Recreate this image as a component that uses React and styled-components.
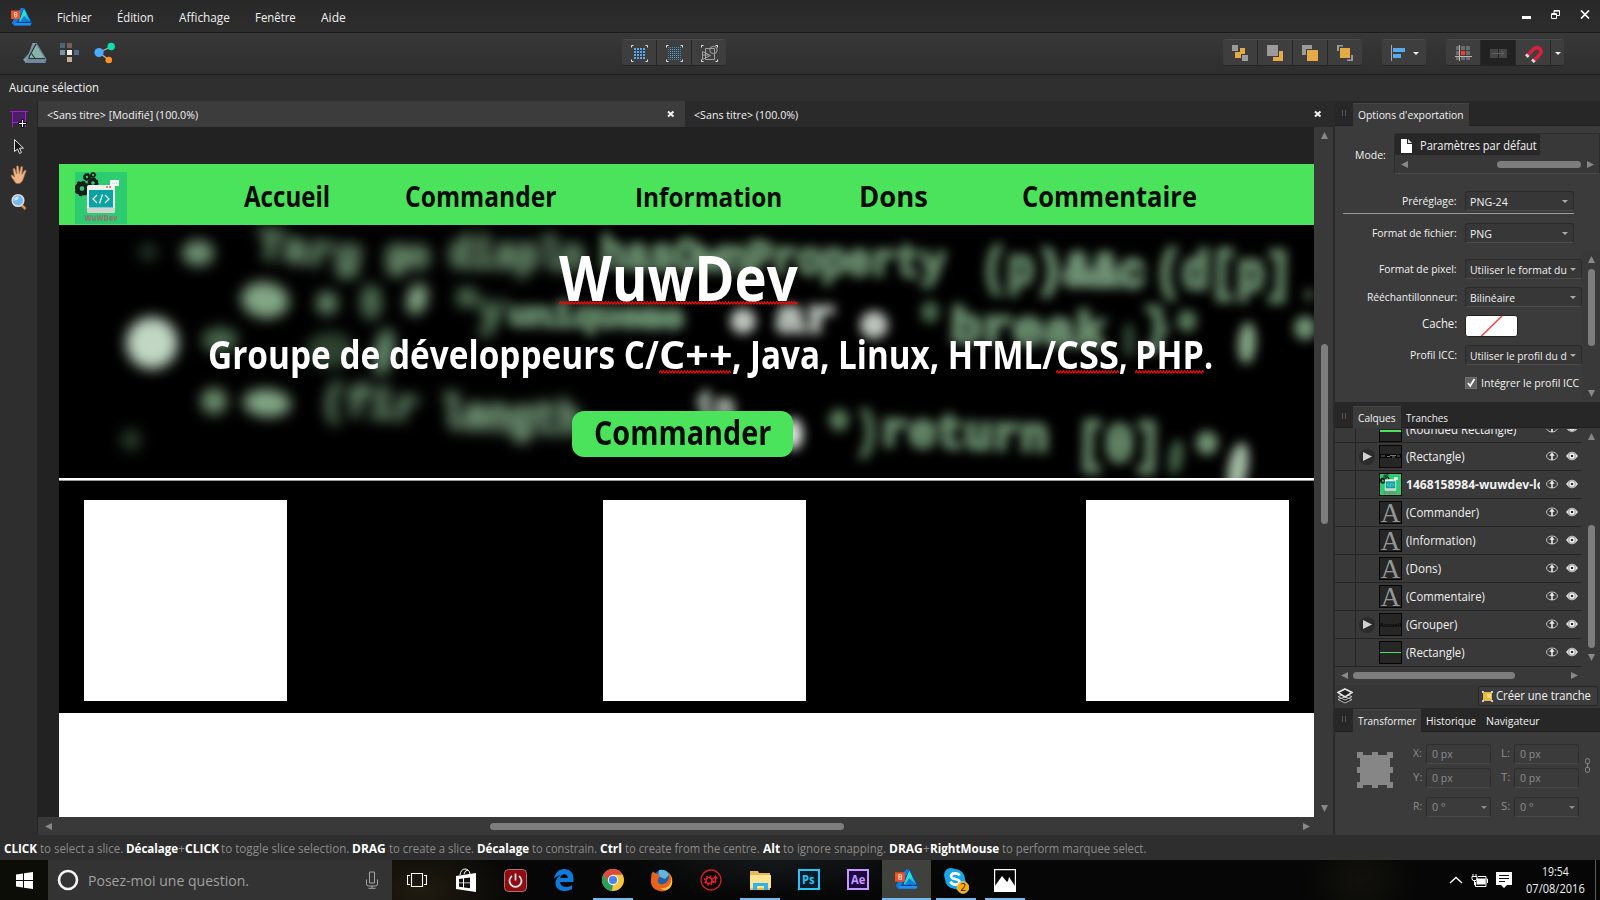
import React, { useLayoutEffect, useRef, useState } from "react";
import styled, { createGlobalStyle, css } from "styled-components";

const Global = createGlobalStyle`
  * { box-sizing: border-box; }
  html, body { margin: 0; background: #2e2e2e; }
  body { font-family: "Open Sans", "Noto Sans", sans-serif; font-size: 12px; color: #f1f1f1; overflow: hidden; }
  svg { display: block; flex: none; }
`;

/* ---------- text fitted to a given width ---------- */
const FitBox = styled.span`
  display: block;
  flex: none;
  width: ${(p) => p.$w}px;
  margin-left: ${(p) => p.$gap || 0}px;
  white-space: nowrap;
  font-size: ${(p) => (p.$size ? p.$size + "px" : "inherit")};
  font-weight: ${(p) => p.$weight || "inherit"};
  line-height: ${(p) => p.$lh || 16}px;
  color: ${(p) => p.$color || "inherit"};
`;
const FitInner = styled.span`
  display: inline-block;
  white-space: pre;
  transform-origin: 0 50%;
`;
function Fit({ w, gap, size, weight, lh, color, children }) {
  const ref = useRef(null);
  const [k, setK] = useState(1);
  useLayoutEffect(() => {
    const natural = ref.current.offsetWidth;
    if (natural) setK(w / natural);
  }, [w, children]);
  return (
    <FitBox $w={w} $gap={gap} $size={size} $weight={weight} $lh={lh} $color={color}>
      <FitInner ref={ref} style={{ transform: `scaleX(${k})` }}>{children}</FitInner>
    </FitBox>
  );
}

/* ---------- frame ---------- */
const Screen = styled.div`
  width: 1600px; height: 900px; display: flex; flex-direction: column; background: #2e2e2e; overflow: hidden;
`;
const TitleBar = styled.header`
  height: 33px; flex: none; display: flex; align-items: center; padding: 2px 10px 0 11px;
  background: linear-gradient(#282828, #2d2d2d); border-bottom: 1px solid #1b1b1b;
`;
const Menu = styled.nav`display: flex; margin-left: 24px; flex: 1; padding-top: 1px;`;
const WindowButtons = styled.div`display: flex; gap: 20px; align-items: center; padding-bottom: 5px;`;
const Toolbar = styled.div`
  height: 42px; flex: none; display: flex; align-items: flex-start; padding: 6px 0 0 23px;
  background: linear-gradient(#383838, #2e2e2e); border-bottom: 1px solid #1b1b1b;
`;
const Personas = styled.div`display: flex; gap: 13px; padding-top: 3px; width: 599px;`;
const ButtonGroup = styled.div`
  display: flex; gap: 1px; height: 27px; margin-left: ${(p) => p.$gap || 0}px; border-radius: 3px; overflow: hidden;
  border-top: 1px solid #4b4b4b; border-bottom: 1px solid #242424; background: #272727;
`;
const ToolButton = styled.div`
  width: ${(p) => p.$w || 34}px; display: flex; align-items: center; justify-content: center; gap: 8px;
  padding: 2px 0 0 ${(p) => (p.$w ? 0 : 1)}px;
  background: ${(p) => (p.$down ? "#222" : "#3e3e3e")};
`;
const ContextBar = styled.div`height: 26px; flex: none; padding: 5px 9px; background: #2f2f2f;`;
const Main = styled.div`display: flex; height: 734px; flex: none;`;
const Tools = styled.aside`
  width: 38px; flex: none; background: #2e2e2e; padding: 10px 0 0 10px; display: flex; flex-direction: column;
  border-right: 1px solid #242424;
`;
const Workspace = styled.section`width: 1295px; flex: none; display: flex; flex-direction: column;`;
const DocTabs = styled.div`height: 26px; display: flex; background: #2a2a2a; flex: none;`;
const DocTab = styled.div`
  width: 647px; display: flex; align-items: center; justify-content: space-between; padding: 1px 10px 0 9px;
  background: ${(p) => (p.$active ? "#3c3c3c" : "#2a2a2a")};
`;
const CloseBox = styled.div`padding-bottom: 1px;`;
const CanvasRow = styled.div`display: flex; height: 690px; flex: none;`;
const Canvas = styled.div`
  width: 1276px; background: #222; padding: 37px 0 0 21px; overflow: hidden; flex: none;
`;
const ScrollV = styled.div`
  width: ${(p) => p.$w || 19}px; display: flex; flex-direction: column; align-items: center; background: #393939; flex: none;
  padding: ${(p) => p.$pad};
`;
const ScrollH = styled.div`
  height: 18px; display: flex; align-items: center; flex: none; background: #393939; padding: ${(p) => p.$pad};
`;
const Thumb = styled.div`
  width: ${(p) => p.$w}px; height: ${(p) => p.$h}px; border-radius: 4px; background: #7d7d7d;
  margin: ${(p) => p.$m || 0}; flex: none;
`;
const Spacer = styled.div`flex: 1;`;

/* ---------- artboard ---------- */
const Artboard = styled.div`width: 1255px; height: 653px; background: #fff; font-weight: 700;`;
const SiteNav = styled.div`
  height: 61px; background: #4be35b; color: #050b06; display: flex; align-items: flex-start; padding: 8px 0 0 16px;
`;
const NavItem = styled.div`margin-left: ${(p) => p.$gap}px; padding-top: ${(p) => p.$top || 0}px;`;
const Hero = styled.div`height: 253px; background: #000; position: relative; overflow: hidden;`;
const HeroBackdrop = styled.svg`position: absolute; left: 0; top: 0;`;
const HeroContent = styled.div`position: relative; height: 253px; padding-top: 18px; color: #fff;`;
const Title = styled.div`padding-left: 500px; height: 86px;`;
const Subtitle = styled.div`display: flex; padding-left: 149px; height: 82px;`;
const OrderButton = styled.div`
  width: 221px; height: 46px; margin-left: 513px; border-radius: 12px; background: #4be35b; color: #050b06;
  padding: 0 0 0 22px;
`;
const Misspelt = styled.div`flex: none;`;
const SquiggleLine = styled.svg`margin-top: ${(p) => p.$up}px;`;
const Rule = styled.div`height: 3px; background: #fff; border-bottom: 1px solid #999;`;
const Cards = styled.div`
  height: 232px; background: #000; display: flex; padding: 20px 0 0 25px;
`;
const Card = styled.div`width: 203px; height: 201px; background: #fff; margin: -1px ${(p) => p.$after || 0}px 0 0;`;

/* ---------- side panels ---------- */
const Side = styled.aside`
  width: 267px; flex: none; background: #3b3b3b; border-left: 2px solid #2a2a2a; display: flex; flex-direction: column;
`;
const PanelTabs = styled.div`
  height: ${(p) => p.$h}px; flex: none; display: flex; align-items: stretch; padding-top: ${(p) => p.$top}px;
  background: #272727; border-bottom: 1px solid #1f1f1f;
`;
const Grip = styled.div`
  width: 4px; height: 6px; margin: 7px 7px 0 7px; border: solid #565656; border-width: 0 1px;
`;
const PanelTab = styled.div`
  display: flex; align-items: center; padding: 0 5px; height: ${(p) => p.$h || 23}px; margin-bottom: -1px;
  background: ${(p) => (p.$active ? "#3b3b3b" : "transparent")};
  ${(p) => p.$active && css`border-top: 1px solid #454545;`}
`;
const ExportPanel = styled.div`height: 276px; flex: none;`;
const ModeRow = styled.div`display: flex; padding: 7px 0 0 20px; height: 65px;`;
const ModeLabel = styled.div`padding-top: 14px; width: 39px;`;
const ModeList = styled.div`
  width: 206px; height: 41px; border: 1px solid #2c2c2c; border-bottom-color: #4b4b4b; border-radius: 3px 0 0 3px;
  background: #383838;
`;
const ModeItem = styled.div`
  width: 145px; height: 21px; background: #272727; display: flex; align-items: center; padding: 2px 0 0 6px; gap: 8px;
`;
const ModeScroll = styled.div`display: flex; align-items: center; padding-left: 6px; height: 18px;`;
const Field = styled.div`display: flex; height: 20px; margin-top: ${(p) => p.$top || 0}px; align-items: center;`;
const Label = styled.div`width: 122px; display: flex; justify-content: flex-end; padding-bottom: ${(p) => p.$lift || 1}px;`;
const Select = styled.div`
  width: ${(p) => p.$w || 117}px; height: 20px; margin-left: 8px; padding: 1px 5px 0 4px; display: flex; align-items: center;
  justify-content: space-between; background: #373737; border: 1px solid #2b2b2b; border-bottom-color: #4d4d4d; border-radius: 3px;
`;
const Divider = styled.div`width: 231px; height: 1px; margin: 2px 0 0 8px; background: #969c98;`;
const ExportBody = styled.div`display: flex; height: 149px; margin-top: 8px;`;
const ExportFields = styled.div`width: 247px; padding-top: 8px;`;
const Swatch = styled.div`
  width: 53px; height: 22px; margin-left: 8px; border: 1px solid #222; border-radius: 3px; background: #fff; overflow: hidden;
`;
const Checkbox = styled.div`
  width: 12px; height: 12px; margin-left: 8px; background: #626262; border: 1px solid #707070;
`;
const LayerArea = styled.div`display: flex; height: 239px; flex: none; overflow: hidden;`;
const LayerList = styled.div`
  width: 247px; height: 239px; display: flex; flex-direction: column; justify-content: flex-end; overflow: hidden; background: #393939;
`;
const LayerRow = styled.div`
  height: ${(p) => (p.$partial ? 14 : 28)}px; flex: none; display: flex; align-items: ${(p) => (p.$partial ? "flex-end" : "center")};
  border-bottom: 1px solid #242424; overflow: hidden;
`;
const LayerGutter = styled.div`width: 21px; height: 28px; flex: none; border-right: 1px solid #242424;`;
const Expander = styled.div`
  width: 16px; height: 16px; border-radius: 8px; margin: 0 4px 0 3px; display: flex; align-items: center; justify-content: center;
  padding-left: 1px; background: ${(p) => (p.$on ? "#2b2b2b" : "transparent")};
`;
const LayerThumb = styled.div`
  width: 23px; height: 23px; border: 1px solid #050505; background: ${(p) => p.$bg || "#262626"}; display: flex; flex: none;
  align-items: center; justify-content: center; color: #959595; font: 27px/20px "Liberation Serif", serif; overflow: hidden;
`;
const Bar = styled.div`width: 21px; height: ${(p) => p.$h}px; background: #4be35b;`;
const MiniWord = styled.span`font: 700 6px/20px "Open Sans", sans-serif; color: ${(p) => p.$c}; white-space: nowrap;`;
const LayerName = styled.div`width: 134px; margin-left: 4px; overflow: hidden; flex: none;`;
const LayerIcons = styled.div`display: flex; gap: 8px; margin-left: 6px; padding-bottom: ${(p) => p.$lift || 1}px;`;
const PanelFooter = styled.div`
  height: 23px; flex: none; display: flex; align-items: center; justify-content: space-between; padding: 0 2px 1px; background: #363636;
`;
const SliceButton = styled.div`
  width: 120px; height: 20px; border: 1px solid #262626; border-radius: 3px; background: #3c3c3c; display: flex; align-items: center;
  padding-left: 3px; gap: 3px;
`;
const TransformPanel = styled.div`flex: 1; display: flex; padding: 12px 0 0 20px;`;
const AnchorBox = styled.div`padding: 8px 0 0 2px; width: 57px;`;
const TransformGrid = styled.div`
  display: grid; grid-template-columns: 14px 65px 23px 65px; grid-template-rows: 20px 20px 30px; row-gap: 4px; height: 98px;
  color: #8d8d8d; align-items: center;
`;
const NumField = styled.div`
  height: 20px; border: 1px solid #2e2e2e; border-bottom-color: #4a4a4a; border-radius: 3px; display: flex; align-items: center;
  justify-content: space-between; padding: 0 3px 0 5px;
`;
const TLabel = styled.div`display: flex; justify-content: flex-end; padding: 0 4px 2px 0;`;
const LinkBox = styled.div`padding: 14px 0 0 6px;`;

/* ---------- status and taskbar ---------- */
const Status = styled.div`height: 25px; flex: none; display: flex; padding: 6px 0 0 4px; background: #2e2e2e; color: #8b8b8b;`;
const Taskbar = styled.footer`
  height: 40px; flex: none; display: flex;
  background: radial-gradient(ellipse 60px 50px at 1360px 20px, #12110c, transparent), radial-gradient(ellipse 100px 60px at 420px 30px, #211b10, transparent),
    radial-gradient(ellipse 160px 40px at 780px 0, #15181b, transparent), #050605;
`;
const Start = styled.div`width: 48px; background: #0d0d07; display: flex; align-items: center; justify-content: center;`;
const Search = styled.div`width: 344px; background: #333; display: flex; align-items: center; padding-left: 9px;`;
const AppCell = styled.div`
  width: 49px; height: 40px; display: flex; align-items: center; justify-content: center; flex: none; padding-left: ${(p) => p.$nudge || 0}px;
  background: ${(p) => (p.$active ? "#3f413d" : "transparent")};
  box-shadow: ${(p) => (p.$active ? "inset 0 -2px #76b9ed" : "none")};
  ${(p) => p.$open && css`background: linear-gradient(#76b9ed, #76b9ed) center bottom / 40px 2px no-repeat;`}
`;
const AdobeTile = styled.div`
  width: 22px; height: 21px; border: 2px solid ${(p) => p.$c}; background: ${(p) => p.$bg}; color: ${(p) => p.$c};
  display: flex; justify-content: center; margin-bottom: 2px;
`;
const Tray = styled.div`display: flex; margin-left: auto; width: 151px; align-items: center;`;
const Clock = styled.div`width: 60px; margin-left: 13px; display: flex; flex-direction: column; align-items: center;`;
const ShowDesktop = styled.div`width: 1px; height: 40px; background: #5d5d5d; margin: 0 4px 0 10px;`;

/* ---------- icons ---------- */
const Tri = ({ d, s = 7, c = "#888" }) => {
  const pts = { up: "0,8 4,0 8,8", down: "0,0 8,0 4,8", left: "8,0 8,8 0,4", right: "0,0 8,4 0,8" }[d];
  return <svg width={s} height={s} viewBox="0 0 8 8"><polygon points={pts} fill={c} /></svg>;
};
const Caret = ({ c = "#ababab" }) => <svg width="6" height="3" viewBox="0 0 6 3"><path d="M0 0h6L3 3z" fill={c} /></svg>;
const Affinity = ({ w = 21, h = 19 }) => (
  <svg width={w} height={h} viewBox="0 0 21 19">
    <path d="M10 0h3.500L21 14.500l-1.500 3H3L.8 15 4 9z" fill="#0c4fa6" />
    <path d="M10 0h3L6 14l-3 3.500L.8 15 4 9z" fill="#1878dc" />
    <path d="M13 1 19.500 13.500H8z" fill="#1cc3e6" />
    <path d="m13 1 2.500 5L12 13.500H8z" fill="#27e0d0" />
    <path d="M13 8l6.500 5.500H9z" fill="#137fd0" />
    <path d="M4 15h16.500l-1 2.500H3z" fill="#1f8ff2" />
    <path d="M8 14.300h12" stroke="#08357a" strokeWidth=".7" fill="none" />
    <rect x="0" y="2.500" width="9" height="8.500" fill="#ef5123" />
    <path d="M3.500 9V4.500h1.500a1.100 1.100 0 0 1 0 2.200h-1M5 6.700a1.100 1.100 0 0 1 0 2.300h-1" stroke="#ffd5c4" fill="none" />
  </svg>
);
const DesignPersona = () => (
  <svg width="24" height="22" viewBox="0 0 24 22">
    <path d="M9.500 1h4.200L23.500 17l-1 4H2.500L0 17.500 5.500 12z" fill="#6b8492" />
    <path d="M13 2.500 21.500 16H6z" fill="#88b2aa" />
    <path d="M5 17.500h18l-1 3H3.500z" fill="#7488a3" />
    <path d="M9.500 1h4L4.500 17 3 20.500 0.500 17.500 5.500 12 8 7z" fill="#8195a5" />
    <path d="M13 2 6.500 14 6 16.500H22M8.500 11.500l4 5.500" stroke="#22383b" fill="none" strokeWidth="1.100" />
  </svg>
);
const PixelPersona = () => (
  <svg width="21" height="21" viewBox="0 0 21 21">
    <rect x="0" y="1" width="5" height="5" fill="#4d6670" /><rect x="7" y="1" width="5" height="5" fill="#775e59" />
    <rect x="0" y="8" width="5" height="5" fill="#7896a0" /><rect x="7" y="8" width="5" height="5" fill="#f0efef" />
    <rect x="14" y="8" width="5" height="5" fill="#536a89" /><rect x="7" y="15" width="5" height="5" fill="#c8ad94" />
  </svg>
);
const ExportPersona = () => (
  <svg width="22" height="22" viewBox="0 0 22 22">
    <path d="M5 10.500 17.500 4.500M5 10.500 15 18" stroke="#a7b9b3" strokeWidth="1.300" />
    <circle cx="5" cy="10.500" r="4.600" fill="#4cabff" /><circle cx="17.200" cy="4.500" r="3.700" fill="#09e2ae" /><circle cx="14.800" cy="18" r="3.300" fill="#ff9021" />
  </svg>
);
const Corners = ({ children }) => (
  <svg width="17" height="17" viewBox="0 0 17 17">
    <path d="M.5 2.500v-2h2M14.500.5h2v2M16.500 14.500v2h-2M2.500 16.500h-2v-2" stroke="#e2e2e2" fill="none" />
    {children}
  </svg>
);
const cells = (n, start, step, size, fill) =>
  Array.from({ length: n * n }, (_, i) => {
    const c = i % n, r = Math.floor(i / n);
    const edge = n > 5 && (c === 0 || r === 0 || c === n - 1 || r === n - 1);
    return <rect key={i} x={start + c * step} y={start + r * step} width={size} height={size} fill={fill} opacity={edge ? 0.65 : 1} />;
  });
const Order = ({ kind }) => (
  <svg width="17" height="17" viewBox="0 1 17 17">
    {kind === 0 && <><path d="M0 1h6v6H0zM10 11h6v6h-6z" fill="#9b9b9b" /><path d="M8 4h5v6H9v4H3V8h5z" fill="#e5a946" /></>}
    {kind === 1 && <><path d="M0 1h11v11H0z" fill="#9b9b9b" /><path d="M12 7h4v10H6v-4h6z" fill="#e5a946" /></>}
    {kind === 2 && <><path d="M0 1h10v4H4v6H0z" fill="#9b9b9b" /><path d="M5 6h11v11H5z" fill="#e5a946" /></>}
    {kind === 3 && <><path d="M0 1h6v1.500H2V7H0zM16 17h-6v-1.500h4V11h2z" fill="#9b9b9b" /><path d="M3 4h10v10H3z" fill="#e5a946" /></>}
  </svg>
);
const CloseX = () => <CloseBox><svg width="8" height="8" viewBox="0 0 8 8"><path d="m1 1.500 5.500 5M6.500 1.500 1 6.500" stroke="#f2f2f2" strokeWidth="2" /></svg></CloseBox>;

const Gear = ({ x, y, r, hole = "#2ecc71" }) => (
  <g>
    <circle cx={x} cy={y} r={r * 0.62} fill="none" stroke="#17201a" strokeWidth={r * 0.62} />
    <circle cx={x} cy={y} r={r * 0.9} fill="none" stroke="#17201a" strokeWidth={r * 0.3} strokeDasharray={`${r * 0.37} ${r * 0.336}`} />
    <circle cx={x} cy={y} r={r * 0.28} fill={hole} />
  </g>
);
const WuwLogo = ({ size = 52 }) => (
  <svg width={size} height={size} viewBox="0 0 52 52">
    <rect width="52" height="52" fill="#2ecc71" />
    <Gear x={7} y={16.500} r={7.500} /><Gear x={12} y={5} r={3.800} /><Gear x={18} y={11} r={5.300} /><Gear x={18} y={3} r={3} />
    <path d="M12 15q0-2 2-2h24q2 0 2 2v24q0 2-2 2H14q-2 0-2-2z" fill="#eef1ee" />
    <path d="M12 36h28v3q0 2-2 2H14q-2 0-2-2z" fill="#cfd6d2" />
    <rect x="14" y="18" width="24" height="17.500" fill="#0aa3a3" />
    <path d="m22 23-4 4 4 4M30 23l4 4-4 4M27.500 22.500l-3 9" stroke="#fff" strokeWidth="1.200" fill="none" />
    <path d="M31 15h2M34 15h2" stroke="#e06a4a" strokeWidth="1.300" />
    <path d="M35 8h9v6h-5l-2 2v-2h-2z" fill="#f4f8f6" /><path d="M37 11h5" stroke="#a9cbbf" strokeDasharray="1 1" />
    <text x="9.500" y="48.800" fontSize="8" textLength="33" lengthAdjust="spacingAndGlyphs" fontFamily="Open Sans, sans-serif" fontWeight="800" fill="#8a7b74">WuWDev</text>
  </svg>
);

function Squiggle({ w, up }) {
  let d = "M0 3";
  for (let x = 1.5, i = 0; x <= w; x += 1.5, i += 1) d += `L${x} ${i % 2 ? 3 : 0.8}`;
  return <SquiggleLine $up={up} width={w} height="4" viewBox={`0 0 ${w} 4`}><path d={d} stroke="#e80c0c" fill="none" strokeWidth="1.300" /></SquiggleLine>;
}
const Word = ({ w, size, lh, up, children }) => (
  <Misspelt>
    <Fit w={w} size={size} lh={lh}>{children}</Fit>
    <Squiggle w={w} up={up} />
  </Misspelt>
);

const codeText = (x, y, w, size, fill, text, rot = 2) => (
  <text key={text + x} x={x} y={y} fontSize={size} textLength={w} lengthAdjust="spacingAndGlyphs" fill={fill} stroke={fill} strokeWidth="4"
    transform={`rotate(${rot} ${x} ${y})`}>{text}</text>
);
const blob = (cx, cy, rx, ry, fill, rot = 0) => (
  <ellipse key={`${cx}-${cy}`} cx={cx} cy={cy} rx={rx} ry={ry} fill={fill} transform={`rotate(${rot} ${cx} ${cy})`} />
);
const Backdrop = () => (
  <HeroBackdrop width="1255" height="253" viewBox="59 225 1255 253" fontFamily="Liberation Mono, monospace" fontWeight="700">
    <defs>
      <filter id="far" x="-20%" y="-20%" width="140%" height="140%" colorInterpolationFilters="sRGB"><feGaussianBlur stdDeviation="7" /></filter>
      <filter id="mid" x="-20%" y="-20%" width="140%" height="140%" colorInterpolationFilters="sRGB"><feGaussianBlur stdDeviation="5.500" /></filter>
    </defs>
    <g filter="url(#far)">
      {blob(148, 252, 10, 9, "#243426")}
      {blob(198, 253, 16, 13, "#6d9071")}
      {blob(152, 343, 26, 26, "#c1d6c3", -30)}
      {blob(265, 300, 24, 18, "#82a685", 8)}
      {blob(327, 303, 11, 12, "#628466")}
      {blob(371, 302, 11, 18, "#4c6a50")}
      {blob(417, 299, 10, 16, "#86aa89", 15)}
      {blob(220, 340, 18, 13, "#466549")}
      {blob(384, 352, 10, 24, "#62876a", 10)}
      {blob(330, 350, 24, 18, "#2d4230")}
      {blob(214, 401, 13, 13, "#6c8e6e")}
      {blob(267, 403, 24, 14, "#82a685", 4)}
      {blob(131, 440, 10, 11, "#2a3b2c")}
      {codeText(256, 257, 104, 42, "#5f8063", "Targ", 7)}
      {codeText(385, 266, 44, 38, "#688a6b", "go")}
      {codeText(449, 266, 135, 44, "#648668", "displn", 1.5)}
      {codeText(452, 323, 52, 46, "#587a5b", "\"y", 4)}
      {codeText(320, 412, 98, 42, "#5f8063", "(fir", 5)}
      {codeText(440, 427, 140, 46, "#709374", "length", 3)}
    </g>
    <g filter="url(#mid)">
      {codeText(508, 325, 176, 34, "#64886a", "uniqueme", 1)}
      {codeText(600, 268, 345, 46, "#688c6c", "hasOwnProperty", 1.5)}
      {codeText(980, 283, 54, 52, "#648868", "(p", 1.5)}
      {codeText(1036, 285, 110, 50, "#74987a", ")&&c", 1)}
      {codeText(1154, 287, 138, 54, "#6c9070", "(d[p]", 1.5)}
      {blob(1309, 295, 4, 6, "#5d8061")}
      {blob(743, 321, 13, 13, "#bcc3bc")}
      {codeText(775, 332, 61, 46, "#b9c1b9", "ar", 0)}
      {blob(874, 325, 14, 14, "#bcc3bc")}
      {blob(930, 312, 9, 11, "#4c6a4f")}
      {codeText(950, 341, 156, 48, "#6c9070", "break", 2)}
      {blob(1129, 340, 6, 18, "#334a36")}
      {codeText(1142, 341, 28, 48, "#64886a", "}", 2)}
      {blob(1187, 321, 10, 11, "#587a5b")}
      {blob(1247, 343, 9, 21, "#84a487", 4)}
      {blob(1305, 328, 11, 12, "#709374")}
      {codeText(695, 424, 40, 44, "#aeb9ae", "in", 0)}
      {blob(793, 434, 10, 16, "#dfe5df")}
      {blob(839, 420, 10, 11, "#587a5b")}
      {codeText(854, 446, 26, 50, "#587a5b", ")", 2)}
      {codeText(880, 445, 168, 48, "#6a8e6e", "return", 2)}
      {codeText(1076, 460, 86, 54, "#6c9070", "[0]", 1)}
      {blob(1176, 457, 7, 18, "#466549", 8)}
      {blob(1207, 443, 11, 12, "#709374")}
      {blob(1238, 468, 10, 26, "#a2bba4", 10)}
    </g>
  </HeroBackdrop>
);

const EyeUp = () => (
  <svg width="12" height="10" viewBox="0 0 12 10">
    <ellipse cx="6" cy="5" rx="5.400" ry="4" fill="none" stroke="#c4c4c4" /><path d="M6 9V3" stroke="#eee" strokeWidth="1.600" /><path d="M3.200 4.800 6 1.500l2.800 3.300z" fill="#eee" />
  </svg>
);
const Eye = () => (
  <svg width="12" height="10" viewBox="0 0 12 10">
    <path d="M0 5Q6-3.500 12 5 6 13.500 0 5z" fill="#dedede" /><circle cx="6" cy="5" r="3.300" fill="#fff" stroke="#666" strokeWidth=".7" /><circle cx="6" cy="5" r="1.300" fill="#2a2a2a" />
  </svg>
);

const layers = [
  { name: "(Rounded Rectangle)", w: 110, kind: "round" },
  { name: "(Rectangle)", w: 59, kind: "code", open: true },
  { name: "1468158984-wuwdev-logo", w: 153, kind: "logo", bold: true },
  { name: "(Commander)", w: 73, kind: "text" },
  { name: "(Information)", w: 70, kind: "text" },
  { name: "(Dons)", w: 35, kind: "text" },
  { name: "(Commentaire)", w: 79, kind: "text" },
  { name: "(Grouper)", w: 51, kind: "group", open: true },
  { name: "(Rectangle)", w: 59, kind: "line" },
];
const CodeThumb = () => (
  <svg width="21" height="5" viewBox="0 0 21 5"><path d="M0 2h21" stroke="#050505" strokeWidth="4" /><path d="M1 2h4M7 2.500h3M10 1.500h6M12 3h3M17 2h3" stroke="#6b816c" /></svg>
);
const thumbs = {
  round: <Bar $h={2} />,
  code: <CodeThumb />,
  logo: <WuwLogo size={21} />,
  text: "A",
  group: <MiniWord $c="#050505">Accueil</MiniWord>,
  line: <Bar $h={1} />,
};

const hints = [
  [1, 0, 33, "CLICK"], [0, 3, 83, "to select a slice."], [1, 3, 52, "Décalage"], [0, 0, 7, "+"], [1, 0, 34, "CLICK"],
  [0, 2, 128, "to toggle slice selection."], [1, 3, 34, "DRAG"], [0, 3, 85, "to create a slice."], [1, 3, 52, "Décalage"],
  [0, 3, 65, "to constrain."], [1, 3, 22, "Ctrl"], [0, 3, 135, "to create from the centre."], [1, 3, 17, "Alt"],
  [0, 3, 103, "to ignore snapping."], [1, 3, 34, "DRAG"], [0, 0, 7, "+"], [1, 0, 69, "RightMouse"], [0, 3, 144, "to perform marquee select."],
];

const Row = ({ label, lw, value, vw, top, w }) => (
  <Field $top={top}>
    <Label><Fit w={lw} size={11.5}>{label}</Fit></Label>
    <Select $w={w}><Fit w={vw} size={11.5}>{value}</Fit><Caret /></Select>
  </Field>
);
const Num = ({ label, value, drop }) => (
  <>
    <TLabel><Fit w={9} size={11.5}>{label}</Fit></TLabel>
    <NumField><Fit w={value === "0 px" ? 21 : 14} size={11.5}>{value}</Fit>{drop && <Caret c="#8d8d8d" />}</NumField>
  </>
);

export default function App() {
  return (
    <Screen>
      <Global />
      <TitleBar>
        <Affinity />
        <Menu>
          <Fit w={35} gap={1} size={12.5}>Fichier</Fit><Fit w={37} gap={25} size={12.5}>Édition</Fit>
          <Fit w={51} gap={25} size={12.5}>Affichage</Fit><Fit w={41} gap={25} size={12.5}>Fenêtre</Fit><Fit w={25} gap={25} size={12.5}>Aide</Fit>
        </Menu>
        <WindowButtons>
          <svg width="9" height="9" viewBox="0 0 9 9"><path d="M0 6h9v3H0z" fill="#fff" /></svg>
          <svg width="9" height="9" viewBox="0 0 9 9"><path d="M.5 3.500h5v5h-5zM0 4.500h6M3 3V.500h5.500v5H6M3 1.200h5.500" stroke="#fff" fill="none" /></svg>
          <svg width="10" height="9" viewBox="0 0 10 9"><path d="m1 .5 8 8M9 .5l-8 8" stroke="#fff" strokeWidth="1.700" /></svg>
        </WindowButtons>
      </TitleBar>

      <Toolbar>
        <Personas><DesignPersona /><PixelPersona /><ExportPersona /></Personas>
        <ButtonGroup>
          <ToolButton><Corners>{cells(4, 3, 3, 2, "#57a9f0")}</Corners></ToolButton>
          <ToolButton><Corners>{cells(7, 2, 2, 1, "#57a9f0")}</Corners></ToolButton>
          <ToolButton><Corners><path d="M4.500 3.500h9v11h-9zM1.500 6.500v8l8-4zM2 10h6" stroke="#a0a0a0" fill="none" /><circle cx="12.500" cy="5" r="3.700" stroke="#a0a0a0" fill="none" /></Corners></ToolButton>
        </ButtonGroup>
        <ButtonGroup $gap={497}>{[0, 1, 2, 3].map((k) => <ToolButton key={k}><Order kind={k} /></ToolButton>)}</ButtonGroup>
        <ButtonGroup $gap={20}>
          <ToolButton $w={44}>
            <svg width="16" height="17" viewBox="0 0 16 17"><path d="M2.500 0v16" stroke="#aaa" /><path d="M4 3h12v4H4zM4 9h8v4H4z" fill="#57a9f0" /></svg><Caret c="#eee" />
          </ToolButton>
        </ButtonGroup>
        <ButtonGroup $gap={20}>
          <ToolButton>
            <svg width="17" height="17" viewBox="0 0 17 17"><path d="M1 1h4v4H1zM6 1h4v4H6zM11 1h4v4h-4zM1 6h4v4H1zM11 6h4v4h-4zM1 11h4v4H1zM6 11h4v4H6zM11 11h4v4h-4z" fill="#6c6c6c" /><path d="M6 6h4v4H6z" fill="#ff3434" /><path d="M4.500 0v16M0 11.500h17" stroke="#b5b5b5" /></svg>
          </ToolButton>
          <ToolButton $down><svg width="17" height="9" viewBox="0 0 17 9"><path d="M0 0h8v9H0zM9 0h8v9H9z" fill="#454545" /><path d="M2 4.500h12M11 2l3 2.500L11 7" stroke="#606060" fill="none" /></svg></ToolButton>
          <ToolButton>
            <svg width="18" height="18" viewBox="0 0 18 18"><path d="M2.500 10.500 9 3.800a4.100 4.100 0 0 1 5.800 5.800L8.500 16" stroke="#da1f3c" strokeWidth="3.600" fill="none" /><path d="m.9 9.300 2.700 2.700M7 14.500l2.700 2.700" stroke="#ddd" strokeWidth="2.500" /></svg>
          </ToolButton>
          <ToolButton $w={13}><Caret c="#eee" /></ToolButton>
        </ButtonGroup>
      </Toolbar>

      <ContextBar><Fit w={90} size={12.5}>Aucune sélection</Fit></ContextBar>

      <Main>
        <Tools>
          <svg width="18" height="17" viewBox="0 0 18 17"><path d="M2 1h14v10H2z" fill="#4c1d66" /><path d="M0 .5h18M2.500 0v16M15.500 0v16M2 11.500h8" stroke="#ab16e2" fill="none" /><path d="M12.500 8.500v8M8.500 12.500h8" stroke="#000" strokeWidth="3" /><path d="M12.500 9v7M9 12.500h7" stroke="#fff" strokeWidth="1.200" /></svg>
          <svg width="18" height="28" viewBox="0 0 18 28"><path d="M4.500 11.500v12l3-2.500 2 4.500 2-1-2-4.300h4z" fill="#161616" stroke="#e4e4e4" /></svg>
          <svg width="18" height="28" viewBox="0 0 18 28"><path d="M5.500 27C3.500 23 1.500 22 1 19.500c.6-1.400 2.500.2 3.500 1.500L3 13c.5-1.300 1.600-.7 1.900 0l1.800 5-.2-7.500c.5-1 1.700-.8 2 0l.8 7 1.600-6.500c.7-1 1.800-.6 1.800.4l-.9 7 2.700-4c.9-.6 1.900 0 1.500 1-2 4-2 7-3.500 9-.8 2.500-4 4-7 2.600z" fill="#edb486" stroke="#a56b43" strokeWidth=".7" /></svg>
          <svg width="18" height="29" viewBox="0 0 18 29"><path d="m11 20.500 4.500 4.500" stroke="#d6904b" strokeWidth="2.500" /><circle cx="8" cy="16.500" r="5.800" fill="#74b7ed" stroke="#dcdcdc" strokeWidth="1.500" /><path d="M4 16.500q0-4 4.500-4 1 4-4.500 4z" fill="#c9e6ff" /></svg>
        </Tools>

        <Workspace>
          <DocTabs>
            <DocTab $active><Fit w={151} size={11.5}>{"<Sans titre> [Modifié] (100.0%)"}</Fit><CloseX /></DocTab>
            <DocTab><Fit w={104} size={11.5}>{"<Sans titre> (100.0%)"}</Fit><CloseX /></DocTab>
          </DocTabs>
          <CanvasRow>
            <Canvas>
              <Artboard>
                <SiteNav>
                  <WuwLogo />
                  <NavItem $gap={117} $top={6}><Fit w={86} size={28} lh={36}>Accueil</Fit></NavItem>
                  <NavItem $gap={75} $top={6}><Fit w={151} size={28} lh={36}>Commander</Fit></NavItem>
                  <NavItem $gap={79} $top={7}><Fit w={147} size={27.5} lh={36}>Information</Fit></NavItem>
                  <NavItem $gap={77} $top={6}><Fit w={69} size={29} lh={36}>Dons</Fit></NavItem>
                  <NavItem $gap={94} $top={6}><Fit w={175} size={28} lh={36}>Commentaire</Fit></NavItem>
                </SiteNav>
                <Hero>
                  <Backdrop />
                  <HeroContent>
                    <Title><Word w={239} size={62.5} lh={68} up={-10}>WuwDev</Word></Title>
                    <Subtitle>
                      <Fit w={451} size={39} lh={49}>Groupe de développeurs C/</Fit>
                      <Word w={73} size={39} lh={49} up={-8}>C++</Word>
                      <Fit w={324} size={39} lh={49}>, Java, Linux, HTML/</Fit>
                      <Word w={63} size={39} lh={49} up={-8}>CSS</Word>
                      <Fit w={16} size={39} lh={49}>, </Fit>
                      <Word w={69} size={39} lh={49} up={-8}>PHP</Word>
                      <Fit w={9} size={39} lh={49}>.</Fit>
                    </Subtitle>
                    <OrderButton><Fit w={177} size={33.5} lh={43}>Commander</Fit></OrderButton>
                  </HeroContent>
                </Hero>
                <Rule />
                <Cards><Card $after={316} /><Card $after={280} /><Card /></Cards>
              </Artboard>
            </Canvas>
            <ScrollV $pad="5px 0 5px 1px"><Tri d="up" /><Thumb $w={7} $h={180} $m="205px 0 0" /><Spacer /><Tri d="down" /></ScrollV>
          </CanvasRow>
          <ScrollH $pad="0 23px 0 7px"><Tri d="left" /><Thumb $w={354} $h={7} $m="1px 0 0 438px" /><Spacer /><Tri d="right" /></ScrollH>
        </Workspace>

        <Side>
          <PanelTabs $h={25} $top={2}><Grip /><PanelTab $active><Fit w={106} size={11.5}>Options d'exportation</Fit></PanelTab></PanelTabs>
          <ExportPanel>
            <ModeRow>
              <ModeLabel><Fit w={31} size={11.5}>Mode:</Fit></ModeLabel>
              <ModeList>
                <ModeItem>
                  <svg width="11" height="14" viewBox="0 0 11 14"><path d="M0 0h6v5h5v9H0z" fill="#fff" /><path d="m7 0 4 4H7z" fill="#ddd" /></svg>
                  <Fit w={117} size={12.5}>Paramètres par défaut</Fit>
                </ModeItem>
                <ModeScroll><Tri d="left" /><Thumb $w={84} $h={7} $m="0 6px 0 89px" /><Tri d="right" /></ModeScroll>
              </ModeList>
            </ModeRow>
            <Row label="Préréglage:" lw={55} value="PNG-24" vw={38} w={109} />
            <Divider />
            <Row label="Format de fichier:" lw={85} value="PNG" vw={22} w={109} top={9} />
            <ExportBody>
              <ExportFields>
                <Row label="Format de pixel:" lw={78} value="Utiliser le format du" vw={97} />
                <Row label="Rééchantillonneur:" lw={90} value="Bilinéaire" vw={45} top={8} />
                <Field $top={9}>
                  <Label $lift={5}><Fit w={35}>Cache:</Fit></Label>
                  <Swatch><svg width="51" height="20" viewBox="0 0 51 20"><path d="M14.500 21 36 0" stroke="#f43b3b" strokeWidth="1.400" /></svg></Swatch>
                </Field>
                <Row label="Profil ICC:" lw={47} value="Utiliser le profil du d" vw={97} top={9} />
                <Field $top={8}>
                  <Label />
                  <Checkbox><svg width="10" height="10" viewBox="0 0 10 10"><path d="m2 5 2.200 3L8.500 1" stroke="#fff" strokeWidth="1.800" fill="none" /></svg></Checkbox>
                  <Fit w={98} gap={4} size={11.5}>Intégrer le profil ICC</Fit>
                </Field>
              </ExportFields>
              <ScrollV $w={18} $pad="5px 0 3px"><Tri d="up" /><Thumb $w={7} $h={77} $m="6px 0 0" /><Spacer /><Tri d="down" /></ScrollV>
            </ExportBody>
          </ExportPanel>

          <PanelTabs $h={26} $top={4}>
            <Grip /><PanelTab $active><Fit w={38} size={11.5}>Calques</Fit></PanelTab><PanelTab><Fit w={42} size={11.5}>Tranches</Fit></PanelTab>
          </PanelTabs>
          <LayerArea>
            <LayerList>
              {layers.map((l, i) => (
                <LayerRow key={i} $partial={i === 0}>
                  <LayerGutter />
                  <Expander $on={l.open}>{l.open && <Tri d="right" s={9} c="#d0d0d0" />}</Expander>
                  <LayerThumb $bg={l.kind === "logo" ? "#2ecc71" : undefined}>{thumbs[l.kind]}</LayerThumb>
                  <LayerName><Fit w={l.w} weight={l.bold ? 700 : 400} lh={i ? 16 : 25}>{l.name}</Fit></LayerName>
                  <LayerIcons $lift={i ? 1 : 9}><EyeUp /><Eye /></LayerIcons>
                </LayerRow>
              ))}
            </LayerList>
            <ScrollV $w={18} $pad="5px 0 6px"><Tri d="up" /><Thumb $w={7} $h={123} $m="85px 0 0" /><Spacer /><Tri d="down" /></ScrollV>
          </LayerArea>
          <ScrollH $pad="0 22px 1px 6px"><Tri d="left" /><Thumb $w={162} $h={7} $m="0 0 0 5px" /><Spacer /><Tri d="right" /></ScrollH>
          <PanelFooter>
            <svg width="16" height="16" viewBox="0 0 16 16"><path d="m8 9 7 2.500-7 3.500-7-3.500zM8 6l7 2.700-7 3.300-7-3.300z" fill="#222" stroke="#bdbdbd" /><path d="m8 1 7 3.500L8 9 1 4.500z" fill="#222" stroke="#e2e2e2" strokeWidth="1.600" /></svg>
            <SliceButton>
              <svg width="11" height="11" viewBox="0 0 11 11"><path d="M1 1h9v9H1z" fill="#e9b93f" /><path d="M5 3h4v4H5z" fill="#f7dc8c" /><path d="M0 0h2v2H0zM9 0h2v2H9zM0 9h2v2H0zM9 9h2v2H9z" fill="#ccc" /></svg>
              <Fit w={95} size={12.5}>Créer une tranche</Fit>
            </SliceButton>
          </PanelFooter>
          <PanelTabs $h={24} $top={1}>
            <Grip /><PanelTab $active><Fit w={58} size={11.5}>Transformer</Fit></PanelTab><PanelTab><Fit w={50} size={11.5}>Historique</Fit></PanelTab><PanelTab><Fit w={54} size={11.5}>Navigateur</Fit></PanelTab>
          </PanelTabs>
          <TransformPanel>
            <AnchorBox>
              <svg width="36" height="36" viewBox="0 0 36 36"><path d="M3 3h30v30H3zM0 0h6v6H0zM15 0h6v6h-6zM30 0h6v6h-6zM0 15h6v6H0zM30 15h6v6h-6zM0 30h6v6H0zM15 30h6v6h-6zM30 30h6v6h-6z" fill="#868686" /></svg>
            </AnchorBox>
            <TransformGrid>
              <Num label="X:" value="0 px" /><Num label="L:" value="0 px" />
              <Num label="Y:" value="0 px" /><Num label="T:" value="0 px" />
              <Num label="R:" value="0 °" drop /><Num label="S:" value="0 °" drop />
            </TransformGrid>
            <LinkBox><svg width="5" height="15" viewBox="0 0 5 15"><rect x=".5" y=".5" width="4" height="5.500" rx="2" fill="none" stroke="#878787" /><rect x=".5" y="9" width="4" height="5.500" rx="2" fill="none" stroke="#878787" /><path d="M2.500 5v5" stroke="#878787" /></svg></LinkBox>
          </TransformPanel>
        </Side>
      </Main>

      <Status>
        {hints.map(([b, gap, w, t], i) => <Fit key={i} w={w} gap={gap} weight={b ? 700 : 400} color={b ? "#fff" : undefined}>{t}</Fit>)}
      </Status>

      <Taskbar>
        <Start><svg width="17" height="17" viewBox="0 0 17 17"><path d="m0 2.500 7-1V8H0zM8 1.300 17 0v8H8zM0 9h7v6.500l-7-1zM8 9h9v8l-9-1.300z" fill="#fff" /></svg></Start>
        <Search>
          <svg width="22" height="22" viewBox="0 0 22 22"><circle cx="11" cy="11" r="9" stroke="#f5f5f5" strokeWidth="2.600" fill="none" /></svg>
          <Fit w={161} gap={9} size={15} lh={20} color="#a0a0a0">Posez-moi une question.</Fit>
          <Spacer />
          <svg width="41" height="18" viewBox="0 0 41 18"><path d="M19.500 1h5v11h-5zM16.500 8.500v4.500q0 2 2 2h7q2 0 2-2V8.500M22 15v2M18.500 17.300h7" transform="translate(-1)" stroke="#a5a5a5" fill="none" /></svg>
        </Search>
        <AppCell><svg width="20" height="16" viewBox="0 0 20 16"><path d="M4.500 1.500h11v13h-11zM3 3.500H.5v9H3M17 3.500h2.500v9H17" stroke="#fff" fill="none" strokeWidth="1.100" /></svg></AppCell>
        <AppCell><svg width="22" height="25" viewBox="0 0 22 25"><path d="M1 8 21 5v19L1 21z" fill="#fff" /><path d="M5 7q1-6 5-6t5 5M9 6q1-4 4-4" stroke="#fff" fill="none" /><path d="m4 11 4-.6v4H4zM9 10.300l6-.8v5H9zM4 15.300h4v4l-4-.6zM9 15.300h6v5l-6-.8z" fill="#111" /></svg></AppCell>
        <AppCell $nudge={1}><svg width="23" height="23" viewBox="0 0 23 23"><rect x=".5" y=".5" width="22" height="22" rx="4" fill="#900b10" stroke="#a87474" /><path d="M8 7a6 6 0 1 0 7 0M11.500 4.500v7" stroke="#eee" strokeWidth="1.700" fill="none" /></svg></AppCell>
        <AppCell><svg width="21" height="22" viewBox="0 0 21 22"><path d="M1 10C2 4 6 0 11 0c6 0 9.500 4 9.500 9.500V13H7c.3 5 7 6.500 12 3.200V20C12 24 3 22 2.500 14.500 2.500 10 5 7.500 8 6c-3 .5-5.500 2-7 4zm6.200-1h7.600C15 3.800 7.800 4 7.200 9z" fill="#0d7bdc" /></svg></AppCell>
        <AppCell $open><svg width="22" height="22" viewBox="0 0 22 22"><circle cx="11" cy="11" r="11" fill="#f5c83c" /><path d="M1.500 5.500A11 11 0 0 1 20.600 5.800H11l-4.500 8z" fill="#dc4b3e" /><path d="M1.500 5.500 6.500 13.800 11 16.200 9.800 22A11 11 0 0 1 1.500 5.500z" fill="#27a05a" /><circle cx="11" cy="11" r="5.200" fill="#f3f3f3" /><circle cx="11" cy="11" r="4.100" fill="#4c83ea" /></svg></AppCell>
        <AppCell><svg width="23" height="23" viewBox="0 0 23 23"><circle cx="12" cy="10.500" r="9.500" fill="#1f5fa8" /><path d="M9 1q8-1 10 5l-4 4-7-3z" fill="#5fb6e2" /><path d="M1.500 5 3 2.500l2.500 2L10 6 8.500 9.500q-2 3.500 1.500 5.500 5 1 8-3.500Q20 7 18 3q5 4 4.300 10Q20 22.500 11.500 22.500 1 21.500.8 12z" fill="#e9631b" /><path d="M20 5.500q3 7-1.500 11.500-3.500 3-8.500 2 5 4 10 0 4.500-5.500 0-13.500z" fill="#f7c33c" /></svg></AppCell>
        <AppCell><svg width="22" height="22" viewBox="0 0 22 22"><circle cx="11" cy="11" r="10" fill="#090202" stroke="#d32227" strokeWidth="1.300" /><circle cx="9" cy="11.500" r="3" fill="none" stroke="#e2252b" strokeWidth="1.600" /><circle cx="9" cy="11.500" r="4.500" fill="none" stroke="#e2252b" strokeWidth="1.500" strokeDasharray="1.800 1.730" /><path d="M12 13h3.500V9" stroke="#e2252b" strokeWidth="1.600" fill="none" /><path d="m13 9.500 2.500-3.500L18 9.500z" fill="#e2252b" /></svg></AppCell>
        <AppCell $open><svg width="22" height="21" viewBox="0 0 22 21"><path d="M1 1h8l1 2h11v17H1z" fill="#e8b957" /><path d="M1 5h21v13H1z" fill="#fde493" /><path d="M4 13h15v7h-4v-4H8v4H4z" fill="#31b2ec" /></svg></AppCell>
        <AppCell><AdobeTile $c="#29c5f6" $bg="#061c2b"><Fit w={13} size={12} lh={17} weight={700}>Ps</Fit></AdobeTile></AppCell>
        <AppCell><AdobeTile $c="#c79aff" $bg="#1d0740"><Fit w={14} size={12} lh={17} weight={700}>Ae</Fit></AdobeTile></AppCell>
        <AppCell $active><Affinity w={23} h={22} /></AppCell>
        <AppCell $open>
          <svg width="26" height="27" viewBox="0 0 26 27"><circle cx="8" cy="8" r="7" fill="#18a8ea" /><circle cx="16" cy="16" r="7" fill="#18a8ea" /><circle cx="12" cy="12" r="10" fill="#18a8ea" /><path d="M16.500 8.500C15 5.500 8 5.500 8 9.300c0 3.700 8.500 1.900 8.500 5.600 0 3.500-7.500 4-9-.4" stroke="#fff" strokeWidth="2.600" fill="none" /><circle cx="20" cy="20.500" r="5.800" fill="#ffad00" stroke="#e5c36f" /><text x="20" y="24" fontSize="10" textAnchor="middle" fontFamily="Open Sans, sans-serif" fill="#111">2</text></svg>
        </AppCell>
        <AppCell $open><svg width="22" height="23" viewBox="0 0 22 23"><path d="M.6.6h20.800v21.800H.6z" fill="#060606" stroke="#fff" strokeWidth="1.200" /><path d="M1 17 8 7l5 6 1-1 1-4 6 9v5H1z" fill="#fff" /></svg></AppCell>
        <Tray>
          <svg width="14" height="8" viewBox="0 0 14 8"><path d="m1 7 6-5.500L13 7" stroke="#fff" strokeWidth="1.400" fill="none" /></svg>
          <Spacer />
          <svg width="17" height="13" viewBox="0 0 17 13"><path d="M5.500 4.500h9v6h-9z" fill="#fff" /><path d="M7 2.500h8v10H4.500V8M15.500 5h1v4M1 2.500h5v2.500l-1 1.500H2L1 5zM2 0v2M5 0v2M3.500 6v5h1" stroke="#fff" fill="none" /></svg>
          <Spacer />
          <svg width="16" height="16" viewBox="0 0 16 16"><path d="M0 0h16v13h-5l-3 3-3-3H0z" fill="#fff" /><path d="M3 3.500h10M3 6.500h10M3 9.500h6" stroke="#111" /></svg>
          <Clock><Fit w={27} lh={17}>19:54</Fit><Fit w={59} lh={17}>07/08/2016</Fit></Clock>
          <ShowDesktop />
        </Tray>
      </Taskbar>
    </Screen>
  );
}
